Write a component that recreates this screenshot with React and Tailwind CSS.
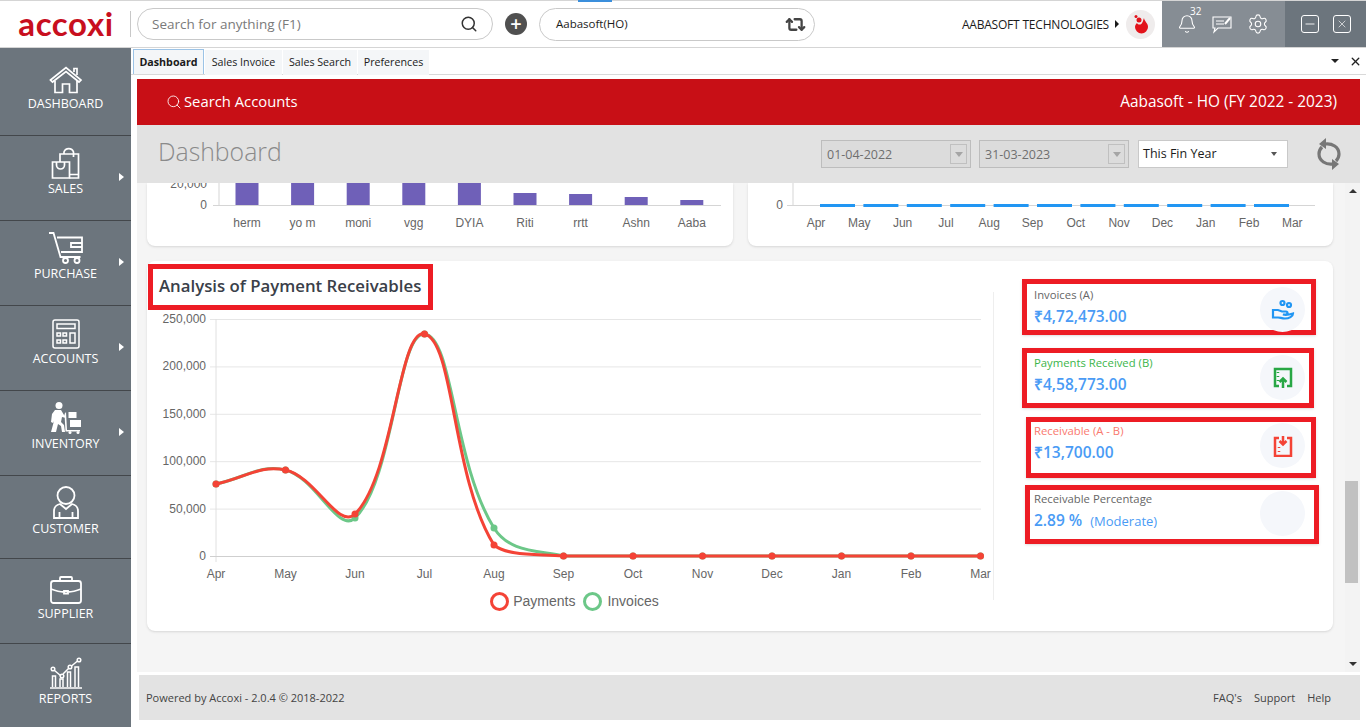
import React from "react";
import { Search, Bell, Settings, Minus, X, Repeat2 } from "lucide-react";

const MONTHS = ["Apr", "May", "Jun", "Jul", "Aug", "Sep", "Oct", "Nov", "Dec", "Jan", "Feb", "Mar"];
const payments = [484, 470, 514, 334, 545, 556, 556, 556, 556, 556, 556, 556];
const invoices = [484, 470, 518, 334, 528, 556, 556, 556, 556, 556, 556, 556];

// same bezier chart.js draws with tension .4
const splinePath = (ys) => {
  const pts = ys.map((y, i) => [66 + i * 69.5, y - 312]);
  const dist = (a, b) => Math.hypot(a[0] - b[0], a[1] - b[1]);
  const ctrl = pts.map((p, i) => {
    const a = pts[i - 1] || p;
    const c = pts[i + 1] || p;
    const d1 = dist(a, p);
    const d2 = dist(p, c);
    const s = d1 + d2 || 1;
    return {
      prev: [p[0] - 0.4 * (d1 / s) * (c[0] - a[0]), p[1] - 0.4 * (d1 / s) * (c[1] - a[1])],
      next: [p[0] + 0.4 * (d2 / s) * (c[0] - a[0]), p[1] + 0.4 * (d2 / s) * (c[1] - a[1])],
    };
  });
  let d = `M${pts[0][0]} ${pts[0][1]}`;
  for (let i = 1; i < pts.length; i++) {
    d += ` C${ctrl[i - 1].next[0]} ${Math.min(ctrl[i - 1].next[1], 244)} ${ctrl[i].prev[0]} ${Math.min(ctrl[i].prev[1], 244)} ${pts[i][0]} ${pts[i][1]}`;
  }
  return d;
};

const HomeIcon = () => (
  <svg width="34" height="28" viewBox="0 0 34 28" fill="none" stroke="white" strokeWidth="1.7">
    <path d="M1.5 14 17 1.5 32 14l-2 2L17 5.5 3.5 16z" />
    <path d="M6 15v11.5h7.5V18h7v8.5H28V15M25 6V2.5h3v6.500" />
  </svg>
);
const BagIcon = () => (
  <svg width="30" height="32" viewBox="0 0 30 32" fill="none" stroke="white" strokeWidth="1.7">
    <path d="M1.500 15h17v16h-17zM5.500 15v3a4 4 0 0 0 8 0v-3" />
    <path d="M9 15V7h18.500v24H18.500M18.500 27.500h9M13 7V5a5 5 0 0 1 9.500 0v5" />
  </svg>
);
const CartIcon = () => (
  <svg width="34" height="32" viewBox="0 0 34 32" fill="none" stroke="white" strokeWidth="1.8">
    <path d="M0 1h4.500l7 24h20M8 5.500h25V20H12M33 11H22v4h11" />
    <circle cx="16.500" cy="28.500" r="2.500" />
    <circle cx="28" cy="28.500" r="2.500" />
  </svg>
);
const CalcIcon = () => (
  <svg width="28" height="30" viewBox="0 0 28 30" fill="none" stroke="white" strokeWidth="1.500">
    <rect x="1" y="1" width="26" height="28" rx="2" />
    <path d="M5 5h18v4.500H5zM5 14h3.500v3H5zM11 14h3.500v3H11zM5 21h3.500v3H5zM11 21h3.500v3H11zM18 14h5v10h-5z" />
  </svg>
);
const InventoryIcon = () => (
  <svg width="32" height="32" viewBox="0 0 32 32" fill="white">
    <circle cx="9" cy="3.500" r="3.500" />
    <path d="M5 8h6l3 5 2 1v2l-4-1-1 5 3 3 1 7h-3l-1-6-3-2-2 8H1l3-11-1 2-2-1 1-8zM18.500 10h8v6h-8zM20 18h11v7H20z" />
    <path d="M16 10l1 18h13v1.500H15.500L14.500 12z" />
    <circle cx="20" cy="30.500" r="1.500" />
    <circle cx="28" cy="30.500" r="1.500" />
  </svg>
);
const CustomerIcon = () => (
  <svg width="26" height="33" viewBox="0 0 26 33" fill="none" stroke="white" strokeWidth="1.800">
    <circle cx="13" cy="9.500" r="8.500" />
    <path d="M7 18C3 19 1 21 1 25v7h24v-7c0-4-2-6-6-7l-6 5zM6.500 26v6M19.500 26v6" />
  </svg>
);
const CaseIcon = () => (
  <svg width="32" height="28" viewBox="0 0 32 28" fill="none" stroke="white" strokeWidth="1.800">
    <rect x="1" y="5" width="30" height="22" rx="2.500" />
    <path d="M10 5V2a1 1 0 0 1 1-1h10a1 1 0 0 1 1 1v3M1 13c5 2 9 3 13 3M31 13c-5 2-9 3-13 3M14 15h4v2.500h-4z" />
  </svg>
);
const ReportIcon = () => (
  <svg width="32" height="32" viewBox="0 0 32 32" fill="none" stroke="white" strokeWidth="1.500">
    <path d="M0 31h32M2.500 30V19h3v11M10 30v-8h3v8M17.500 30V15h3v15M25 30V10h3.500v20" />
    <path d="M4 13l7 6M13 17l6-6M21.500 9l6-5" />
    <circle cx="3" cy="12" r="1.800" />
    <circle cx="12" cy="19" r="1.800" />
    <circle cx="20" cy="10" r="1.800" />
    <circle cx="29" cy="3" r="1.800" />
  </svg>
);

const menu = [
  { label: "DASHBOARD", icon: <HomeIcon />, h: "h-[88px]", pt: "pt-[13px]" },
  { label: "SALES", icon: <BagIcon />, arrow: true },
  { label: "PURCHASE", icon: <CartIcon />, arrow: true },
  { label: "ACCOUNTS", icon: <CalcIcon />, arrow: true },
  { label: "INVENTORY", icon: <InventoryIcon />, arrow: true },
  { label: "CUSTOMER", icon: <CustomerIcon />, h: "h-[83px]" },
  { label: "SUPPLIER", icon: <CaseIcon />, pt: "pt-[12px]" },
  { label: "REPORTS", icon: <ReportIcon />, pt: "pt-[12px]", last: true },
];

const SideItem = ({ item }) => (
  <div className={`relative flex flex-col items-center shrink-0 ${item.h || "h-[85px]"} ${item.pt || "pt-[10px]"} ${item.last ? "" : "border-b border-[#43474b]"}`}>
    <div className="h-[33px] flex items-end justify-center">{item.icon}</div>
    <span className="mt-[1px] text-[12.5px] leading-[17px] text-white">{item.label}</span>
    {item.arrow && <span className="absolute right-[7px] top-[37px] w-0 h-0 border-y-[4px] border-y-transparent border-l-[5px] border-l-white" />}
  </div>
);

const Tab = ({ children, active }) => (
  <div className={`h-[25px] flex items-center justify-center text-[10.7px] text-[#1b1b1b] ${active ? "font-bold bg-[#f4f6f8] border border-b-0 border-[#9cc3e6] w-[71px]" : "bg-[#f4f6f8] mt-[1px]"}`}>
    {children}
  </div>
);

const DateBox = ({ value }) => (
  <div className="w-[150px] h-[28px] border border-[#bdbdbd] bg-[#dcdcdc] flex items-center justify-between pl-[5px] pr-[3px]">
    <span className="text-[12.5px] text-[#6f6f6f] mt-[3px]">{value}</span>
    <span className="w-[17px] h-[20px] border border-[#c0c0c0] flex items-center justify-center">
      <span className="w-0 h-0 border-x-[4px] border-x-transparent border-t-[5px] border-t-[#a5a5a5]" />
    </span>
  </div>
);

const BarChart = () => {
  const names = ["herm", "yo m", "moni", "vgg", "DYIA", "Riti", "rrtt", "Ashn", "Aaba"];
  const tops = [0, 0, 0, 0, 0, 10, 11, 14, 17];
  return (
    <svg width="586" height="63" className="block">
      <text x="60" y="5" textAnchor="end" fontSize="12" fill="#666">20,000</text>
      <text x="60" y="26" textAnchor="end" fontSize="12" fill="#666">0</text>
      <path d="M72 0V22M66 22.500H574" stroke="#d5d5d5" />
      {names.map((n, i) => (
        <g key={n}>
          <rect x={88.500 + i * 55.600} y={tops[i]} width="23" height={22 - tops[i]} fill="#6f60b8" />
          <text x={100 + i * 55.600} y="44" textAnchor="middle" fontSize="12" fill="#666">{n}</text>
        </g>
      ))}
    </svg>
  );
};

const DashChart = () => (
  <svg width="585" height="63" className="block">
    <text x="35" y="26" textAnchor="end" fontSize="12" fill="#666">0</text>
    <path d="M45 0V22M39 22.500H567" stroke="#d5d5d5" />
    {Array.from({ length: 11 }).map((_, i) => (
      <rect key={i} x={72 + i * 43.400} y="21" width="35" height="3" fill="#2196f3" />
    ))}
    {MONTHS.map((m, i) => (
      <text key={m} x={68 + i * 43.300} y="44" textAnchor="middle" fontSize="12" fill="#666">{m}</text>
    ))}
  </svg>
);

const LineChart = () => (
  <svg width="845" height="272" className="block font-['Liberation_Sans',sans-serif]">
    {[0, 1, 2, 3, 4, 5].map((i) => (
      <g key={i}>
        <path d={`M60 ${7.500 + i * 47.400}H831`} stroke="#e6e6e6" />
        <text x="56" y={11 + i * 47.400} textAnchor="end" fontSize="12" fill="#666">
          {["250,000", "200,000", "150,000", "100,000", "50,000", "0"][i]}
        </text>
      </g>
    ))}
    <path d="M66 7V250" stroke="#e0e0e0" />
    <path d="M60 244.500H831" stroke="#cfcfcf" />
    <path d={splinePath(invoices)} fill="none" stroke="#6cc788" strokeWidth="3" />
    {invoices.map((y, i) => <circle key={i} cx={66 + i * 69.5} cy={y - 312} r="3.500" fill="#6cc788" />)}
    <path d={splinePath(payments)} fill="none" stroke="#f44336" strokeWidth="3" />
    {payments.map((y, i) => <circle key={i} cx={66 + i * 69.5} cy={y - 312} r="3.500" fill="#f44336" />)}
    {MONTHS.map((m, i) => (
      <text key={m} x={66 + i * 69.5} y="266" textAnchor="middle" fontSize="12" fill="#666">{m}</text>
    ))}
  </svg>
);

const HandIcon = () => (
  <svg width="24" height="24" viewBox="0 0 24 24" fill="none" stroke="#2196f3" strokeWidth="2.200">
    <circle cx="11.500" cy="5" r="2" />
    <circle cx="18" cy="7" r="2" />
    <path d="M2 12h5l4 1.500h4a1.300 1.300 0 0 1 0 3h-3c3 1 7 0 10-1 0 3-4 5-8 5-3 0-5-1-7-1H2z" />
  </svg>
);
const UpIcon = () => (
  <svg width="20" height="22" viewBox="0 0 20 22" fill="none" stroke="#28a745" strokeWidth="2.500">
    <path d="M6 19H2V2h16v17h-4M5 5v1M5 9v1M5 13v1" />
    <path d="M10 21V12M6.500 15 10 11.500 13.500 15" />
  </svg>
);
const DownIcon = () => (
  <svg width="20" height="22" viewBox="0 0 20 22" fill="none" stroke="#f44336" strokeWidth="2.500">
    <path d="M6 3H2v18h16V3h-4M6 12v1M6 16v1" />
    <path d="M10 1v8M6.500 6 10 9.500 13.500 6" />
  </svg>
);
const RefreshIcon = () => (
  <svg width="26" height="32" viewBox="0 0 26 32" fill="none" stroke="#777" strokeWidth="3.200" className="ml-[28px]">
    <path d="M9 6c7-1 14 3 14 10 0 3-1 5-3 7" />
    <path d="M17 26c-7 1-14-3-14-10 0-3 1-5 3-7" />
    <path d="M10 0 3 6l7 5zM16 21l7 5-7 6z" fill="#777" stroke="none" />
  </svg>
);

const StatBox = ({ box, title, titleColor, children, icon }) => (
  <div className={`border-[5px] border-[#ed1c24] bg-white flex justify-between shadow-sm ${box}`}>
    <div className="flex flex-col">
      <span className={`text-[11.3px] leading-[16px] ${titleColor}`}>{title}</span>
      <div className="mt-[2px] text-[#4a9bf5] leading-[22px] whitespace-nowrap">{children}</div>
    </div>
    <div className="w-[45px] h-[45px] rounded-full bg-[#f5f7fb] flex items-center justify-center shrink-0">{icon}</div>
  </div>
);

export default function App() {
  return (
    <div className="w-screen h-screen overflow-hidden flex flex-col bg-white font-['Open_Sans','Noto_Sans',sans-serif]">
      <header className="relative h-[48px] shrink-0 flex items-center border-y border-[#d5d5d5] bg-white">
        <span className="absolute left-[578px] top-[-1px] w-[34px] h-[2px] bg-[#3b8fdc]" />
        <div className="w-[131px] h-[26px] shrink-0 flex items-center justify-center border-r border-[#c8c8c8]">
          <span className="font-['Lato',sans-serif] text-[33px] leading-none tracking-[0.6px] font-bold text-[#c80f1e] -mt-[2px] ml-[2px]">accoxi</span>
        </div>
        <div className="ml-[6px] w-[356px] h-[32px] rounded-full border border-[#c9c9c9] flex items-center justify-between pl-[14px] pr-[14px]">
          <span className="text-[13.5px] text-[#7a7a7a]">Search for anything (F1)</span>
          <Search size={18} color="#333" strokeWidth={2} />
        </div>
        <div className="ml-[12px] w-[22px] h-[22px] rounded-full bg-[#505050] flex items-center justify-center text-white text-[20px] leading-none font-semibold">+</div>
        <div className="ml-[12px] w-[276px] h-[33px] rounded-full border border-[#c9c9c9] flex items-center justify-between pl-[16px] pr-[8px]">
          <span className="text-[11.5px] text-[#1b1b1b]">Aabasoft(HO)</span>
          <Repeat2 size={21} color="#444" strokeWidth={2.6} />
        </div>
        <div className="ml-auto flex items-center h-full">
          <span className="text-[12px] tracking-[-0.2px] text-[#1b1b1b] mt-[2px]">AABASOFT TECHNOLOGIES</span>
          <span className="ml-[6px] w-0 h-0 border-y-[4px] border-y-transparent border-l-[4px] border-l-[#1b1b1b]" />
          <div className="ml-[7px] mr-[7px] w-[29px] h-[29px] rounded-full bg-[#efecec] flex items-center justify-center">
            <svg width="16" height="20" viewBox="0 0 16 20">
              <circle cx="3" cy="2.500" r="1.500" fill="#e2131b" />
              <circle cx="6" cy="6" r="2.500" fill="#e2131b" />
              <path d="M11 4c0 3 4 5 4 9a6.500 6.500 0 0 1-13 0c0-2 1-3 2-4 1 2 4 2 5 0 1-1 1-3 2-5z" fill="#e2131b" />
            </svg>
          </div>
          <div className="relative w-[123px] h-full bg-[#868d94] flex items-center pl-[15px] gap-[15px]">
            <Bell size={20} color="white" strokeWidth={1.300} />
            <span className="absolute left-[28px] top-[5px] text-[10px] leading-none text-white">32</span>
            <svg width="20" height="20" viewBox="0 0 20 20" fill="none" stroke="white" strokeWidth="1.100">
              <path d="M1 3h18v11H6l-4 4 1-4H1z" />
              <path d="M4 7h8M4 10h8" />
              <path d="M13 10l5-6" strokeWidth="2" />
            </svg>
            <Settings size={22} color="white" strokeWidth={1.200} />
          </div>
          <div className="w-[81px] h-full bg-[#6c757d] flex items-center justify-center gap-[14px]">
            <span className="w-[18px] h-[18px] border border-white rounded-[3px] flex items-center justify-center"><Minus size={14} color="white" strokeWidth={1.500} /></span>
            <span className="w-[18px] h-[18px] border border-white rounded-[3px] flex items-center justify-center"><X size={12} color="white" strokeWidth={1.300} /></span>
          </div>
        </div>
      </header>

      <div className="flex-1 flex min-h-0">
        <aside className="w-[131px] shrink-0 bg-[#6c757d] overflow-hidden">
          {menu.map((item) => <SideItem key={item.label} item={item} />)}
        </aside>

        <main className="flex-1 min-w-0 flex flex-col">
          <div className="h-[27px] shrink-0 flex items-start gap-[1px] pl-[2px] pt-[1px] border-b border-[#d9d9d9]">
            <Tab active>Dashboard</Tab>
            <Tab><span className="w-[77px] text-center">Sales Invoice</span></Tab>
            <Tab><span className="w-[74px] text-center">Sales Search</span></Tab>
            <Tab><span className="w-[71px] text-center">Preferences</span></Tab>
            <div className="ml-auto flex items-center h-[24px] gap-[10px] pr-[4px]">
              <span className="w-0 h-0 border-x-[4px] border-x-transparent border-t-[4px] border-t-[#222]" />
              <X size={13} color="#222" strokeWidth={2.500} />
            </div>
          </div>

          <div className="flex-1 min-h-0 flex flex-col pl-[6px] pr-[6px] pt-[4px]">
            <div className="h-[46px] shrink-0 bg-[#c80f16] flex items-center justify-between pl-[29px] pr-[23px] text-white">
              <div className="flex items-center gap-[2px]">
                <Search size={16} color="white" strokeWidth={1.300} />
                <span className="text-[14.8px] -mt-[1px]">Search Accounts</span>
              </div>
              <span className="text-[15.4px]">Aabasoft - HO (FY 2022 - 2023)</span>
            </div>

            <div className="h-[58px] shrink-0 bg-[#e2e2e2] flex items-center pl-[22px] pr-[18px]">
              <span className="text-[24.8px] font-light text-[#8a8a8a] -mt-[4px] -ml-[1px]">Dashboard</span>
              <div className="ml-auto flex items-center">
                <DateBox value="01-04-2022" />
                <div className="w-[8px]" />
                <DateBox value="31-03-2023" />
                <div className="ml-[9px] w-[150px] h-[28px] bg-white border border-[#c9c9c9] flex items-center justify-between pl-[4px] pr-[10px]">
                  <span className="text-[12.500px] text-[#1b1b1b] mt-[1px]">This Fin Year</span>
                  <span className="w-0 h-0 border-x-[3.500px] border-x-transparent border-t-[4px] border-t-[#555]" />
                </div>
                <RefreshIcon />
              </div>
            </div>

            <div className="h-[489px] shrink-0 bg-[#f5f5f5] flex overflow-hidden font-['Liberation_Sans',sans-serif]">
              <div className="flex-1 min-w-0 pl-[10px] pr-[12px] flex flex-col">
                <div className="flex gap-[15px] h-[63px] shrink-0">
                  <div className="w-[586px] bg-white rounded-b-lg shadow-sm overflow-hidden"><BarChart /></div>
                  <div className="w-[585px] bg-white rounded-b-lg shadow-sm overflow-hidden"><DashChart /></div>
                </div>
                <div className="mt-[15px] h-[370px] shrink-0 bg-white rounded-lg shadow-sm flex font-['Open_Sans',sans-serif]">
                  <div className="w-[846px] shrink-0 pt-[3px] pl-[1px]">
                    <div className="w-[285px] h-[46px] border-[5px] border-[#ed1c24] flex items-center pl-[6px]">
                      <span className="text-[16.8px] font-semibold text-[#3a4049] whitespace-nowrap -mt-[2px]">Analysis of Payment Receivables</span>
                    </div>
                    <div className="mt-[2px] ml-[2px]"><LineChart /></div>
                    <div className="mt-[7px] flex items-center justify-center gap-[6px] pl-[10px] font-['Liberation_Sans',sans-serif] text-[14px] text-[#666] -ml-[2px]">
                      <span className="w-[19px] h-[19px] rounded-full border-[3px] border-[#f44336]" />
                      <span className="-ml-[2px] mr-[2px]">Payments</span>
                      <span className="w-[19px] h-[19px] rounded-full border-[3px] border-[#6cc788]" />
                      <span className="-ml-[1px]">Invoices</span>
                    </div>
                  </div>
                  <div className="w-[1px] my-[31px] bg-[#eeeeee]" />
                  <div className="flex-1 min-w-0 flex flex-col">
                    <StatBox box="ml-[28px] mt-[18px] w-[294px] h-[56px] pl-[7px] pr-[6px] pt-[3px]" title="Invoices (A)" titleColor="text-[#666666]" icon={<HandIcon />}>
                      <span className="text-[15.5px] font-semibold">₹4,72,473.00</span>
                    </StatBox>
                    <StatBox box="ml-[28px] mt-[13px] w-[292px] h-[60px] pl-[7px] pr-[4px] pt-[2px]" title="Payments Received (B)" titleColor="text-[#3cb54a]" icon={<UpIcon />}>
                      <span className="text-[15.5px] font-semibold">₹4,58,773.00</span>
                    </StatBox>
                    <StatBox box="ml-[32px] mt-[9px] w-[290px] h-[61px] pl-[3px] pr-[6px] pt-[1px]" title="Receivable (A - B)" titleColor="text-[#f9796f]" icon={<DownIcon />}>
                      <span className="text-[15.5px] font-semibold">₹13,700.00</span>
                    </StatBox>
                    <StatBox box="ml-[31px] mt-[7px] w-[294px] h-[59px] pl-[4px] pr-[9px] pt-[1px]" title="Receivable Percentage" titleColor="text-[#666666]">
                      <span className="text-[15.5px] font-semibold">2.89 %</span>
                      <span className="ml-[8px] text-[13px]">(Moderate)</span>
                    </StatBox>
                  </div>
                </div>
              </div>
              <div className="w-[15px] shrink-0 bg-[#f3f3f3] flex flex-col items-center relative">
                <span className="mt-[6px] w-0 h-0 border-x-[4px] border-x-transparent border-b-[4px] border-b-[#333]" />
                <span className="mt-[288px] w-[13px] h-[102px] -ml-[2px] bg-[#c1c1c1]" />
                <span className="mt-[79px] w-0 h-0 border-x-[4px] border-x-transparent border-t-[4px] border-t-[#333]" />
              </div>
            </div>

            <div className="mt-[3px] ml-[2px] h-[45px] shrink-0 bg-[#e3e3e3] flex items-center justify-between pl-[7px] pr-[29px] pt-[2px] text-[11px] text-[#444]">
              <span>Powered by Accoxi - 2.0.4 © 2018-2022</span>
              <div className="flex gap-[12px]">
                <span>FAQ's</span>
                <span>Support</span>
                <span>Help</span>
              </div>
            </div>
          </div>
        </main>
      </div>
    </div>
  );
}
